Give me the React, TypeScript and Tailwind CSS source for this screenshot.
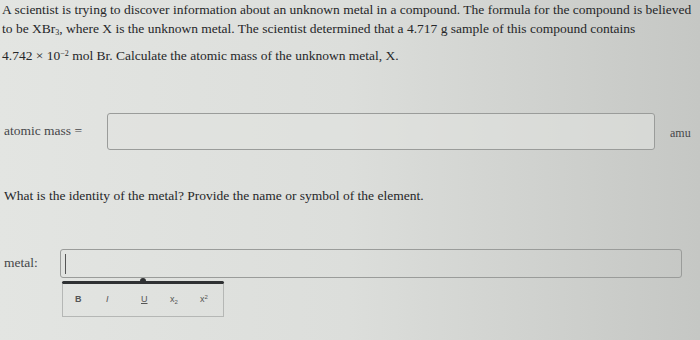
export default function App() {
  return (
    <div className="w-[700px] h-[340px] overflow-hidden bg-linear-to-r from-[#e3e5e2] via-[#dcdedb] to-[#c5c7c4] text-[#262729] font-['Liberation_Serif',serif]">
      {/* Question */}
      <p className="pl-[2px] text-[13.5px] leading-[19px] whitespace-nowrap">
        A scientist is trying to discover information about an unknown metal in a compound. The formula for the compound is believed
        <br />
        to be XBr<sub className="text-[8px]">3</sub>, where X is the unknown metal. The scientist determined that a 4.717 g sample of this compound contains
        <br />
        <span className="inline-block pt-[8px]">
          4.742 × 10<sup className="text-[8px]">−2</sup> mol Br. Calculate the atomic mass of the unknown metal, X.
        </span>
      </p>

      {/* Atomic mass */}
      <div className="flex items-center mt-[48px] pl-[4px]">
        <span className="w-[103px] text-[13.5px] text-[#46474a]">atomic mass =</span>
        <div className="w-[548px] h-[37px] border border-[#9a9c9a] rounded-[3px] bg-[#e1e3e0]/60" />
        <span className="ml-[15px] text-[12px] text-[#46474a] pt-[2px]">amu</span>
      </div>

      {/* Identity question */}
      <p className="mt-[38px] pl-[4px] text-[13.5px] leading-[16px]">
        What is the identity of the metal? Provide the name or symbol of the element.
      </p>

      {/* Metal */}
      <div className="flex items-center mt-[45px] pl-[4px]">
        <span className="w-[56px] text-[13.5px] text-[#46474a]">metal:</span>
        <div className="w-[622px] h-[29px] border border-[#9a9c9a] rounded-[3px] flex items-center pl-[4px]">
          <div className="w-[1px] h-[20px] bg-[#555]" />
        </div>
      </div>

      {/* Toolbar */}
      <div className="ml-[62px] w-[162px] mt-[3px] relative">
        <div className="h-[3px] bg-[#2f3133] rounded-full" />
        <div className="absolute left-[78px] top-[-3px] w-[6px] h-[6px] rounded-full bg-[#2f3133]" />
        <div className="h-[33px] border border-t-0 border-[#b5b7b5] flex items-center pl-[12px] font-['Liberation_Sans',sans-serif] text-[9px] text-[#555]">
          <span className="w-[31px] font-bold">B</span>
          <span className="w-[35px] italic">I</span>
          <span className="w-[29px] underline">U</span>
          <span className="w-[30px]">x<sub className="text-[6px]">2</sub></span>
          <span>x<sup className="text-[6px]">2</sup></span>
        </div>
      </div>
    </div>
  )
}
